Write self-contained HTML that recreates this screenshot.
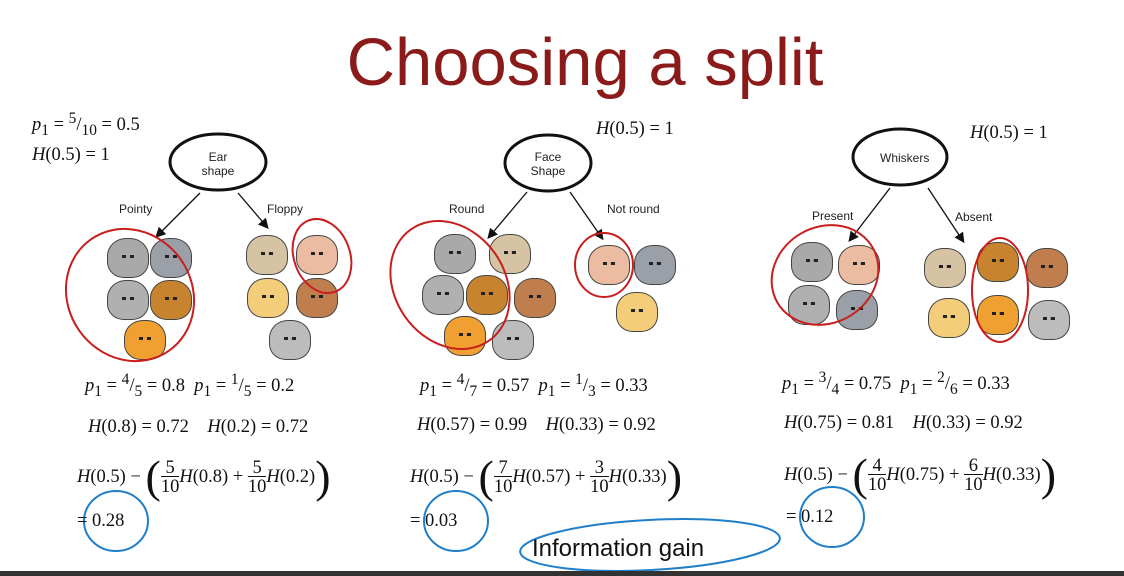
<!DOCTYPE html><html><head><style>
body{margin:0;width:1124px;height:576px;background:#fff;position:relative;overflow:hidden;font-family:"Liberation Serif",serif}
.a{position:absolute;white-space:nowrap}
.m{font-size:18.5px;color:#111}
.s{font-family:"Liberation Sans",sans-serif;font-size:12px;color:#222}
.an{position:absolute;width:42px;height:40px;border-radius:45% 45% 40% 40%;border:1.5px solid #444;box-sizing:border-box}
.an::after{content:"";position:absolute;left:14px;top:16px;width:12px;height:4px;border-top:3px dotted #222}
</style></head><body>
<div class="a" style="left:0;top:24px;width:1170px;text-align:center;font-family:'Liberation Sans',sans-serif;font-size:67px;color:#8b1a1a">Choosing a split</div>
<div class="a m" style="left:32px;top:110px"><i>p</i><sub>1</sub> = <sup>5</sup>/<sub>10</sub> = 0.5</div>
<div class="a m" style="left:32px;top:145px"><i>H</i>(0.5) = 1</div>
<div class="a m" style="left:596px;top:119px"><i>H</i>(0.5) = 1</div>
<div class="a m" style="left:970px;top:123px"><i>H</i>(0.5) = 1</div>
<svg class="a" style="left:0;top:0" width="1124" height="576">
<defs><marker id="ar" markerWidth="8" markerHeight="8" refX="6" refY="4" orient="auto"><path d="M0,0L8,4L0,8z" fill="#111"/></marker></defs>
<g fill="none" stroke="#111" stroke-width="3"><ellipse cx="218" cy="162" rx="48" ry="28"/><ellipse cx="548" cy="163" rx="43" ry="28"/><ellipse cx="900" cy="157" rx="47" ry="28"/></g>
<g stroke="#111" stroke-width="1.3" marker-end="url(#ar)"><line x1="200" y1="193" x2="157" y2="236"/><line x1="238" y1="193" x2="267" y2="227"/><line x1="527" y1="192" x2="489" y2="237"/><line x1="570" y1="192" x2="602" y2="238"/><line x1="890" y1="188" x2="850" y2="240"/><line x1="928" y1="188" x2="963" y2="241"/></g>
</svg>
<div class="a s" style="left:198px;top:150px;text-align:center;width:40px">Ear<br>shape</div>
<div class="a s" style="left:526px;top:150px;text-align:center;width:44px">Face<br>Shape</div>
<div class="a s" style="left:880px;top:151px">Whiskers</div>
<div class="a s" style="left:119px;top:202px">Pointy</div><div class="a s" style="left:267px;top:202px">Floppy</div>
<div class="a s" style="left:449px;top:202px">Round</div><div class="a s" style="left:607px;top:202px">Not round</div>
<div class="a s" style="left:812px;top:209px">Present</div><div class="a s" style="left:955px;top:210px">Absent</div>
<div class="an" style="left:107px;top:238px;background:#a9a9a9"></div><div class="an" style="left:150px;top:238px;background:#9ba0a8"></div>
<div class="an" style="left:107px;top:280px;background:#b0b0b0"></div><div class="an" style="left:150px;top:280px;background:#c8832e"></div>
<div class="an" style="left:124px;top:320px;background:#f0a030"></div>
<div class="an" style="left:246px;top:235px;background:#d6c3a3"></div><div class="an" style="left:296px;top:235px;background:#ebbca2"></div>
<div class="an" style="left:247px;top:278px;background:#f3cd7a"></div><div class="an" style="left:296px;top:278px;background:#c07e4e"></div>
<div class="an" style="left:269px;top:320px;background:#bcbcbc"></div>
<div class="an" style="left:434px;top:234px;background:#a9a9a9"></div><div class="an" style="left:489px;top:234px;background:#d6c3a3"></div>
<div class="an" style="left:422px;top:275px;background:#b0b0b0"></div><div class="an" style="left:466px;top:275px;background:#c8832e"></div><div class="an" style="left:514px;top:278px;background:#c07e4e"></div>
<div class="an" style="left:444px;top:316px;background:#f0a030"></div><div class="an" style="left:492px;top:320px;background:#bcbcbc"></div>
<div class="an" style="left:588px;top:245px;background:#ebbca2"></div><div class="an" style="left:634px;top:245px;background:#9ba0a8"></div>
<div class="an" style="left:616px;top:292px;background:#f3cd7a"></div>
<div class="an" style="left:791px;top:242px;background:#a9a9a9"></div><div class="an" style="left:838px;top:245px;background:#ebbca2"></div>
<div class="an" style="left:788px;top:285px;background:#b0b0b0"></div><div class="an" style="left:836px;top:290px;background:#9ba0a8"></div>
<div class="an" style="left:924px;top:248px;background:#d6c3a3"></div><div class="an" style="left:977px;top:242px;background:#c8832e"></div><div class="an" style="left:1026px;top:248px;background:#c07e4e"></div>
<div class="an" style="left:928px;top:298px;background:#f3cd7a"></div><div class="an" style="left:977px;top:295px;background:#f0a030"></div><div class="an" style="left:1028px;top:300px;background:#bcbcbc"></div>
<svg class="a" style="left:0;top:0" width="1124" height="576"><g fill="none" stroke="#c81e1e" stroke-width="2">
<ellipse cx="130" cy="295" rx="62" ry="68" transform="rotate(-35 130 295)"/>
<ellipse cx="322" cy="256" rx="28" ry="38" transform="rotate(-20 322 256)"/>
<ellipse cx="450" cy="285" rx="55" ry="68" transform="rotate(-35 450 285)"/>
<ellipse cx="604" cy="265" rx="29" ry="32"/>
<ellipse cx="825" cy="275" rx="55" ry="48" transform="rotate(-30 825 275)"/>
<ellipse cx="1000" cy="290" rx="28" ry="52"/></g>
<g fill="none" stroke="#1f7fc8" stroke-width="2">
<ellipse cx="116" cy="521" rx="32" ry="30"/><ellipse cx="456" cy="521" rx="32" ry="30"/><ellipse cx="832" cy="517" rx="32" ry="30"/>
<ellipse cx="650" cy="545" rx="130" ry="25" transform="rotate(-3 650 545)"/></g></svg>
<div class="a m" style="left:85px;top:371px"><i>p</i><sub>1</sub> = <sup>4</sup>/<sub>5</sub> = 0.8&nbsp; <i>p</i><sub>1</sub> = <sup>1</sup>/<sub>5</sub> = 0.2</div>
<div class="a m" style="left:420px;top:371px"><i>p</i><sub>1</sub> = <sup>4</sup>/<sub>7</sub> = 0.57&nbsp; <i>p</i><sub>1</sub> = <sup>1</sup>/<sub>3</sub> = 0.33</div>
<div class="a m" style="left:782px;top:369px"><i>p</i><sub>1</sub> = <sup>3</sup>/<sub>4</sub> = 0.75&nbsp; <i>p</i><sub>1</sub> = <sup>2</sup>/<sub>6</sub> = 0.33</div>
<div class="a m" style="left:88px;top:417px"><i>H</i>(0.8) = 0.72&nbsp;&nbsp;&nbsp; <i>H</i>(0.2) = 0.72</div>
<div class="a m" style="left:417px;top:415px"><i>H</i>(0.57) = 0.99&nbsp;&nbsp;&nbsp; <i>H</i>(0.33) = 0.92</div>
<div class="a m" style="left:784px;top:413px"><i>H</i>(0.75) = 0.81&nbsp;&nbsp;&nbsp; <i>H</i>(0.33) = 0.92</div>
<div class="a m" style="left:77px;top:450px"><i>H</i>(0.5) − <span style="font-size:46px;vertical-align:-10px">(</span><span style="display:inline-block;text-align:center;vertical-align:middle;line-height:19px">5<br><span style="border-top:1px solid #111">10</span></span><i>H</i>(0.8) + <span style="display:inline-block;text-align:center;vertical-align:middle;line-height:19px">5<br><span style="border-top:1px solid #111">10</span></span><i>H</i>(0.2)<span style="font-size:46px;vertical-align:-10px">)</span></div>
<div class="a m" style="left:410px;top:450px"><i>H</i>(0.5) − <span style="font-size:46px;vertical-align:-10px">(</span><span style="display:inline-block;text-align:center;vertical-align:middle;line-height:19px">7<br><span style="border-top:1px solid #111">10</span></span><i>H</i>(0.57) + <span style="display:inline-block;text-align:center;vertical-align:middle;line-height:19px">3<br><span style="border-top:1px solid #111">10</span></span><i>H</i>(0.33)<span style="font-size:46px;vertical-align:-10px">)</span></div>
<div class="a m" style="left:784px;top:448px"><i>H</i>(0.5) − <span style="font-size:46px;vertical-align:-10px">(</span><span style="display:inline-block;text-align:center;vertical-align:middle;line-height:19px">4<br><span style="border-top:1px solid #111">10</span></span><i>H</i>(0.75) + <span style="display:inline-block;text-align:center;vertical-align:middle;line-height:19px">6<br><span style="border-top:1px solid #111">10</span></span><i>H</i>(0.33)<span style="font-size:46px;vertical-align:-10px">)</span></div>
<div class="a m" style="left:77px;top:511px">= 0.28</div>
<div class="a m" style="left:410px;top:511px">= 0.03</div>
<div class="a m" style="left:786px;top:507px">= 0.12</div>
<div class="a" style="left:532px;top:535px;font-family:'Liberation Sans',sans-serif;font-size:24px;color:#111">Information gain</div>
<div class="a" style="left:0;top:571px;width:1124px;height:5px;background:#333"></div>
</body></html>
